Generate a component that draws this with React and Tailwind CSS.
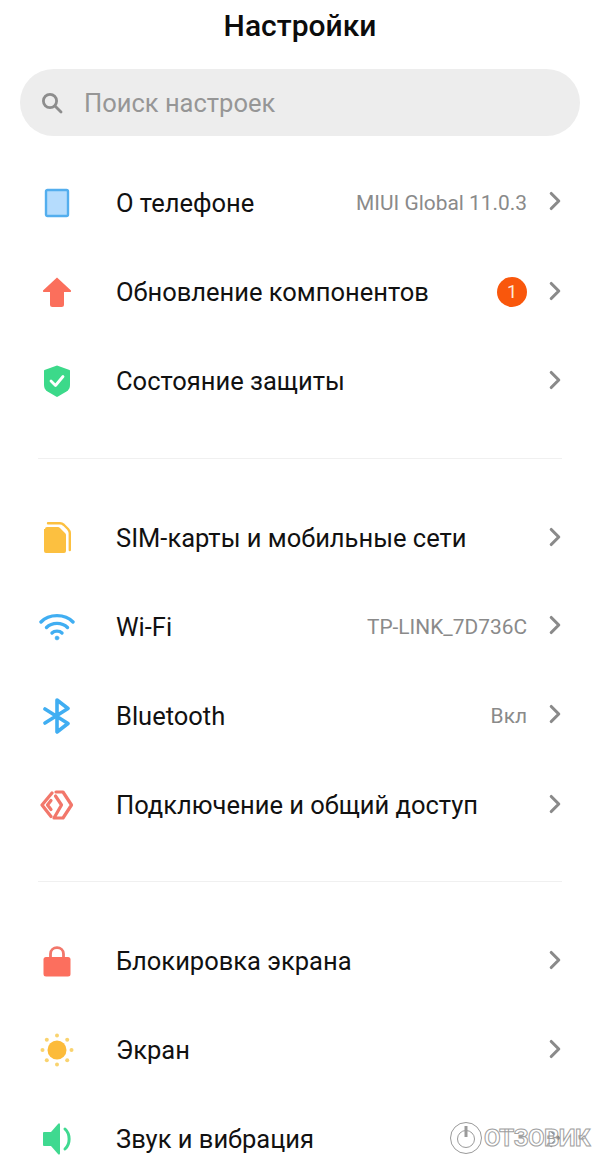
import { ChevronRight } from 'lucide-react';

const IconPhone = () => (
  <svg width="26" height="30" viewBox="0 0 26 30">
    <rect x="2" y="2" width="22" height="26" rx="1.5" fill="#b5dcfd" stroke="#53aeee" strokeWidth="2.4" />
  </svg>
);

const IconUpdate = () => (
  <svg width="30" height="32" viewBox="0 0 30 32">
    <path d="M15 1.5 L29 14.5 Q29.5 16 28 16 H22 V28.5 Q22 31 19.5 31 H10.5 Q8 31 8 28.5 V16 H2 Q0.5 16 1 14.5 Z" fill="#fb6f5c" />
  </svg>
);

const IconShield = () => (
  <svg width="28" height="32" viewBox="0 0 28 32">
    <path d="M14 0.5 L26.5 5 Q27 5.2 27 6 V20 Q27 24 23.5 26.5 L14.5 31.8 Q14 32 13.5 31.8 L4.5 26.5 Q1 24 1 20 V6 Q1 5.2 1.5 5 Z" fill="#3cd98a" />
    <path d="M8 16 L12.5 20.5 L20 11.5" fill="none" stroke="#fff" strokeWidth="2.8" strokeLinecap="round" strokeLinejoin="round" />
  </svg>
);

const IconSim = () => (
  <svg width="28" height="32" viewBox="0 0 28 32">
    <path d="M5 1.2 H17 Q19 1.2 21 3 L25 7 Q26.8 9 26.8 11 V28" fill="none" stroke="#fcc040" strokeWidth="2.4" strokeLinecap="round" />
    <path d="M2 7 Q2 5 4 5 H15 Q16 5 17 6 L22 11 Q23 12 23 13 V29 Q23 31 21 31 H3 Q1 31 1 29 V7 Z" fill="#fcc040" />
  </svg>
);

const IconWifi = () => (
  <svg width="36" height="28" viewBox="0 0 36 28" fill="none" stroke="#40aef2" strokeWidth="3.4" strokeLinecap="round">
    <path d="M2 9 C10 0.5 26 0.5 34 9" />
    <path d="M7.5 14.5 C13 9 23 9 28.5 14.5" />
    <path d="M13 20 C15.5 17.5 20.5 17.5 23 20" />
    <circle cx="18" cy="25" r="2" fill="#40aef2" strokeWidth="0.5" />
  </svg>
);

const IconBluetooth = () => (
  <svg width="28" height="36" viewBox="0 0 28 36" fill="none" stroke="#40aef2" strokeWidth="3.6" strokeLinecap="round" strokeLinejoin="round">
    <path d="M2 11 L25 25.5 L14 34 V2 L25 10.5 L2 25" />
  </svg>
);

const IconShare = () => (
  <svg width="34" height="30" viewBox="0 0 34 30" fill="none" stroke="#f2776b" strokeWidth="3.2" strokeLinejoin="round" strokeLinecap="round">
    <path d="M16 2 H23 L31.5 15 L23 28 H14 L21.5 15 L15.5 6" />
    <path d="M12 3 L2 15 L11 26.5" />
    <path d="M11 10.5 L7.5 15 L11 19.5" />
  </svg>
);

const IconLock = () => (
  <svg width="28" height="32" viewBox="0 0 28 32">
    <path d="M7.5 13 V9 C7.5 0.5 20.5 0.5 20.5 9 V13" fill="none" stroke="#f2776b" strokeWidth="2.8" />
    <rect x="0.5" y="12" width="27" height="19.5" rx="2.5" fill="#fc6f5e" />
  </svg>
);

const IconSun = () => (
  <svg width="34" height="34" viewBox="0 0 34 34">
    <circle cx="17" cy="17" r="9.5" fill="#fcbb3a" />
    <g fill="#f9d36f">
      <circle cx="17" cy="2.5" r="2" />
      <circle cx="17" cy="31.5" r="2" />
      <circle cx="2.5" cy="17" r="2" />
      <circle cx="31.5" cy="17" r="2" />
      <circle cx="6.8" cy="6.8" r="2" />
      <circle cx="27.2" cy="6.8" r="2" />
      <circle cx="6.8" cy="27.2" r="2" />
      <circle cx="27.2" cy="27.2" r="2" />
    </g>
  </svg>
);

const IconSound = () => (
  <svg width="30" height="34" viewBox="0 0 30 34">
    <path d="M1 11 Q1 10 2 10 H9 L16 2 Q17.5 0.5 18 2.5 V31.5 Q17.5 33.5 16 32 L9 24 H2 Q1 24 1 23 Z" fill="#3fd990" />
    <path d="M23 7 C28.5 12 28.5 22 23 27" fill="none" stroke="#3fd990" strokeWidth="3" strokeLinecap="round" />
  </svg>
);

const IconSearch = () => (
  <svg width="22" height="22" viewBox="0 0 22 22" fill="none" stroke="#8d8d8d" strokeWidth="2.8" strokeLinecap="round">
    <circle cx="9" cy="9" r="6.6" />
    <path d="M14 14 L20 20" />
  </svg>
);

const Row = ({ icon, label, value, badge }) => (
  <div className="flex h-[89px] items-center pl-[19px] pr-[30px]">
    <div className="flex w-[76px] justify-center">{icon}</div>
    <span className="ml-[21px] pt-[2px] text-[25.5px] text-[#111]">{label}</span>
    <div className="ml-auto flex items-center">
      {value && <span className="pt-[2px] text-[20.9px] text-[#8a8a8a]">{value}</span>}
      {badge && (
        <span className="flex h-[30px] w-[30px] items-center justify-center rounded-full bg-[#f9570c] text-[18px] text-[#ffe9dc]">
          {badge}
        </span>
      )}
      <ChevronRight className="ml-[13px] -translate-y-px text-[#8a8a8a]" size={30} strokeWidth={2.5} />
    </div>
  </div>
);

const Divider = ({ className }) => (
  <div className={`pb-[34px] px-[38px] ${className}`}>
    <div className="h-px bg-[#f0f0f0]" />
  </div>
);

const App = () => (
  <div className="relative h-[1162px] w-[600px] overflow-hidden bg-white font-['Roboto',sans-serif]">
    <h1 className="pt-[8px] text-center text-[30px] leading-[36px] font-medium text-[#0c0c0c]">Настройки</h1>

    <div className="mx-[20px] mt-[25px] flex h-[67px] items-center rounded-full bg-[#ededed] pl-[21px]">
      <IconSearch />
      <span className="ml-[21px] pt-[2px] text-[25.5px] text-[#969696]">Поиск настроек</span>
    </div>

    <div className="mt-[22px]">
      <Row icon={<IconPhone />} label="О телефоне" value="MIUI Global 11.0.3" />
      <Row icon={<IconUpdate />} label="Обновление компонентов" badge="1" />
      <Row icon={<IconShield />} label="Состояние защиты" />
      <Divider className="pt-[33px]" />
      <Row icon={<IconSim />} label="SIM-карты и мобильные сети" />
      <Row icon={<IconWifi />} label="Wi-Fi" value="TP-LINK_7D736C" />
      <Row icon={<IconBluetooth />} label="Bluetooth" value="Вкл" />
      <Row icon={<IconShare />} label="Подключение и общий доступ" />
      <Divider className="pt-[32px]" />
      <Row icon={<IconLock />} label="Блокировка экрана" />
      <Row icon={<IconSun />} label="Экран" />
      <Row icon={<IconSound />} label="Звук и вибрация" />
    </div>

    {/* watermark sits over the last row */}
    <div className="absolute left-[449px] top-[1120px] flex items-center">
      <svg width="34" height="34" viewBox="0 0 34 34" fill="none" stroke="#9a9a9a" strokeWidth="1">
        <circle cx="17" cy="17" r="15.5" />
        <circle cx="17" cy="18" r="8.5" />
        <path d="M17 5 V16" strokeWidth="3" />
      </svg>
      <span className="ml-[1px] text-[24px] font-bold tracking-[-0.5px] text-white [-webkit-text-stroke:1px_#a0a0a0]">ОТЗОВИК</span>
    </div>
  </div>
);

export default App;
